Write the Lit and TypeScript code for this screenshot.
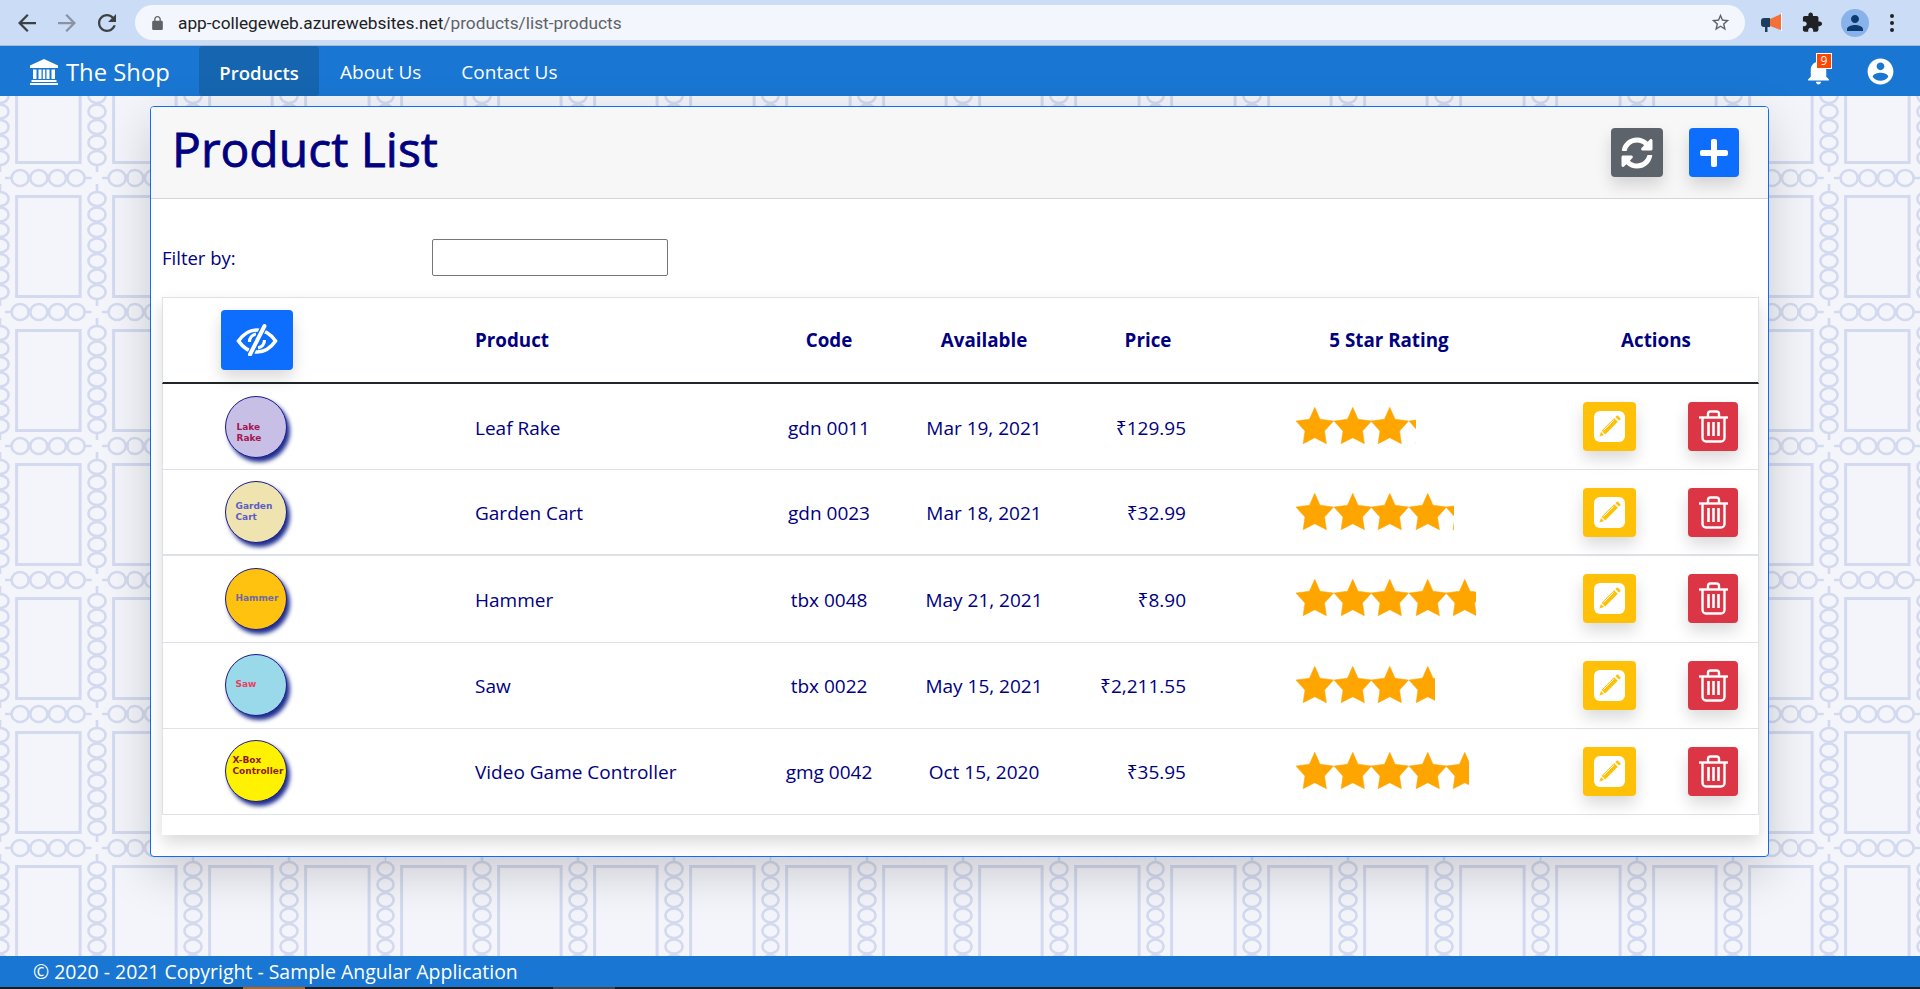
import { LitElement, html, svg, css } from 'lit';
import { customElement, state } from 'lit/decorators.js';

interface Product {
  name: string;
  code: string;
  available: string;
  price: string;
  rating: number;
  label: string[];
  disc: string;
  ink: string;
  inset: number;
  lift: number;
}

const PRODUCTS: Product[] = [
  { name: 'Leaf Rake', code: 'gdn 0011', available: 'Mar 19, 2021', price: '₹129.95', rating: 3.2, label: ['Lake', 'Rake'], disc: '#c8bfe7', ink: '#a3174c', inset: 11, lift: 12 },
  { name: 'Garden Cart', code: 'gdn 0023', available: 'Mar 18, 2021', price: '₹32.99', rating: 4.2, label: ['Garden', 'Cart'], disc: '#efe4b0', ink: '#5c5cc8', inset: 10, lift: 0 },
  { name: 'Hammer', code: 'tbx 0048', available: 'May 21, 2021', price: '₹8.90', rating: 4.8, label: ['Hammer'], disc: '#ffc20e', ink: '#6a6aa8', inset: 10, lift: 0 },
  { name: 'Saw', code: 'tbx 0022', available: 'May 15, 2021', price: '₹2,211.55', rating: 3.7, label: ['Saw'], disc: '#99d9ea', ink: '#ea3f5c', inset: 10, lift: -2 },
  { name: 'Video Game Controller', code: 'gmg 0042', available: 'Oct 15, 2020', price: '₹35.95', rating: 4.6, label: ['X-Box', 'Controller'], disc: '#fff200', ink: '#8c1c13', inset: 7, lift: -10 },
];

const STAR_WIDTH = 37.5;

const starIcon = svg`<path d="M50 1L64 33 100 38 76 65 81 99 50 83 19 99 24 65 0 38 36 33z" stroke="#ffa500" stroke-width="1.5" stroke-linejoin="round" />`;

@customElement('app-root')
export class AppRoot extends LitElement {
  static styles = css`
    :host {
      display: flex;
      flex-direction: column;
      height: 989px;
      overflow: hidden;
      font-family: 'Open Sans', 'Noto Sans', sans-serif;
      color: #000080;
      background-color: #f4f4fb;
      background-image: url("data:image/svg+xml,%3Csvg xmlns='http://www.w3.org/2000/svg' width='96.25' height='134'%3E%3Cg fill='none' stroke='%23d3d9ee' stroke-width='2.6'%3E%3Crect x='16.500' y='18.500' width='63' height='100' stroke-width='3'/%3E%3Cellipse cx='0' cy='21' rx='8.500' ry='7'/%3E%3Cellipse cx='0' cy='36.500' rx='8.500' ry='7'/%3E%3Cellipse cx='0' cy='52' rx='8.500' ry='7'/%3E%3Cellipse cx='0' cy='67.500' rx='8.500' ry='7'/%3E%3Cellipse cx='0' cy='83' rx='8.500' ry='7'/%3E%3Cellipse cx='0' cy='98.500' rx='8.500' ry='7'/%3E%3Cellipse cx='0' cy='114' rx='8.500' ry='7'/%3E%3Cellipse cx='96.250' cy='21' rx='8.500' ry='7'/%3E%3Cellipse cx='96.250' cy='36.500' rx='8.500' ry='7'/%3E%3Cellipse cx='96.250' cy='52' rx='8.500' ry='7'/%3E%3Cellipse cx='96.250' cy='67.500' rx='8.500' ry='7'/%3E%3Cellipse cx='96.250' cy='83' rx='8.500' ry='7'/%3E%3Cellipse cx='96.250' cy='98.500' rx='8.500' ry='7'/%3E%3Cellipse cx='96.250' cy='114' rx='8.500' ry='7'/%3E%3Cellipse cx='20' cy='0' rx='8.500' ry='8'/%3E%3Cellipse cx='38.500' cy='0' rx='8.500' ry='8'/%3E%3Cellipse cx='57' cy='0' rx='8.500' ry='8'/%3E%3Cellipse cx='75.500' cy='0' rx='8.500' ry='8'/%3E%3Cellipse cx='20' cy='134' rx='8.500' ry='8'/%3E%3Cellipse cx='38.500' cy='134' rx='8.500' ry='8'/%3E%3Cellipse cx='57' cy='134' rx='8.500' ry='8'/%3E%3Cellipse cx='75.500' cy='134' rx='8.500' ry='8'/%3E%3Cpath d='M0 14V6M0 121V128M96.250 14V6M96.250 121V128M12 0H5M84 0H91M12 134H5M84 134H91'/%3E%3C/g%3E%3C/svg%3E");
      background-size: 96.25px 134px;
      background-position: 0.5px 44px;
    }

    svg {
      display: block;
      fill: currentColor;
    }

    .chrome {
      display: flex;
      align-items: center;
      height: 45px;
      flex: none;
      background: #cbdcf6;
      border-bottom: 1px solid #a9bbd3;
      color: #3c4043;
    }
    .chrome-nav {
      display: flex;
      align-items: center;
      width: 135px;
      flex: none;
      padding-left: 18px;
      gap: 22px;
      box-sizing: border-box;
    }
    .chrome-nav svg {
      width: 18px;
      height: 18px;
    }
    .chrome-nav .off {
      color: #8a93a3;
    }
    .omnibox {
      display: flex;
      align-items: center;
      width: 1610px;
      height: 35px;
      flex: none;
      box-sizing: border-box;
      padding: 0 14px 0 16px;
      border-radius: 18px;
      background: #f3f6fc;
      font-family: 'Roboto', sans-serif;
      font-size: 17.3px;
      color: #5f6368;
    }
    .omnibox .lock {
      width: 13px;
      height: 14px;
      margin-right: 14px;
    }
    .omnibox .host {
      color: #202124;
    }
    .omnibox .fav {
      width: 21px;
      height: 21px;
      margin-left: auto;
      color: #5f6368;
    }
    .chrome-tools {
      display: flex;
      align-items: center;
      flex: 1;
      padding-left: 16px;
      gap: 19px;
    }
    .chrome-tools .puzzle {
      width: 21px;
      height: 21px;
      color: #202124;
    }
    .avatar {
      display: flex;
      align-items: center;
      justify-content: center;
      width: 28px;
      height: 28px;
      border-radius: 50%;
      background: #8ab2ea;
      color: #0b3a70;
      margin-left: -1px;
    }
    .avatar svg {
      width: 24px;
      height: 24px;
    }
    .kebab {
      display: flex;
      flex-direction: column;
      gap: 3px;
      margin-left: 2px;
    }
    .kebab i {
      width: 4px;
      height: 4px;
      border-radius: 50%;
      background: #202124;
    }

    .topnav {
      display: flex;
      align-items: stretch;
      height: 50px;
      flex: none;
      background: #1976d2;
      color: #fff;
    }
    .brand {
      display: flex;
      align-items: center;
      width: 199px;
      flex: none;
      box-sizing: border-box;
      padding-left: 30px;
      gap: 8px;
      font-size: 23.8px;
      padding-top: 2px;
    }
    .brand svg {
      width: 28px;
      height: 26px;
    }
    .navlink {
      display: flex;
      align-items: center;
      padding: 2px 20px 0;
      font-size: 19px;
      border-radius: 4px;
    }
    .navlink.active {
      width: 120px;
      box-sizing: border-box;
      justify-content: center;
      padding: 2px 0 0;
      background: #1565b0;
      font-size: 18.5px;
      font-weight: 600;
    }
    .navlink.active + .navlink {
      margin-left: 1px;
    }
    .nav-right {
      display: flex;
      align-items: center;
      margin-left: auto;
      padding-right: 24px;
      gap: 31px;
    }
    .bell {
      position: relative;
    }
    .bell svg {
      width: 31px;
      height: 31px;
    }
    .bell .badge {
      position: absolute;
      top: -3px;
      right: 2px;
      width: 16px;
      height: 16px;
      box-sizing: border-box;
      border: 1px solid #fff;
      background: #ff4500;
      font-size: 12px;
      line-height: 14px;
      text-align: center;
    }
    .account svg {
      width: 31px;
      height: 31px;
    }

    main {
      flex: 1;
      min-height: 0;
      padding: 10px 0 0 150px;
    }
    .card {
      width: 1619px;
      height: 751px;
      box-sizing: border-box;
      border: 1px solid #0d6efd;
      border-radius: 4px;
      background: #fff;
      box-shadow: 0 16px 48px rgba(0, 0, 0, 0.175);
    }
    .card-head {
      display: flex;
      align-items: center;
      height: 92px;
      box-sizing: border-box;
      padding: 0 29px 0 21px;
      background: #f7f7f7;
      border-bottom: 1px solid #d5d5d8;
      border-radius: 3px 3px 0 0;
    }
    .card-head h1 {
      margin: -8px auto 0 0;
      font-size: 48px;
      font-weight: 400;
      line-height: 1;
      -webkit-text-stroke: 0.8px #000080;
    }
    .btn {
      display: flex;
      align-items: center;
      justify-content: center;
      height: 49px;
      border-radius: 4px;
      flex: none;
      color: #fff;
      box-shadow: 0 8px 16px rgba(0, 0, 0, 0.15);
    }
    .btn.refresh {
      width: 52px;
      background: #5c636a;
      margin-right: 26px;
    }
    .btn.refresh svg {
      width: 32px;
      height: 32px;
    }
    .btn.add {
      width: 50px;
      background: #0d6efd;
    }
    .btn.add svg {
      width: 28px;
      height: 32px;
    }
    .filter {
      display: flex;
      align-items: center;
      height: 98px;
      padding: 18px 0 0 11px;
      box-sizing: border-box;
      font-size: 18.5px;
    }
    .filter label {
      width: 270px;
      flex: none;
    }
    .filter input {
      width: 236px;
      height: 37px;
      box-sizing: border-box;
      border: 1px solid #767676;
      border-radius: 2px;
      background: #fff;
    }

    .table {
      width: 1597px;
      height: 538px;
      margin-left: 11px;
      box-sizing: border-box;
      border-top: 1px solid #dee2e6;
      background: #fff;
      box-shadow: 0 8px 16px rgba(0, 0, 0, 0.15);
      font-size: 19px;
    }
    .row {
      display: grid;
      grid-template-columns: 187px 400px 158px 152px 176px 306px 216px;
      align-items: center;
      height: 86.2px;
      padding-top: 2px;
      box-sizing: border-box;
      border-bottom: 1px solid #dee2e6;
      border-left: 1px solid #dee2e6;
      border-right: 1px solid #dee2e6;
    }
    .row:nth-child(3) {
      border-bottom-width: 2px;
    }
    .row.head {
      height: 86px;
      padding-top: 0;
      font-weight: 700;
      border-bottom: 2px solid #212529;
      font-size: 18.8px;
    }
    .cell-center {
      text-align: center;
    }
    .cell-name {
      padding-left: 125px;
    }
    .cell-price {
      text-align: right;
      padding-right: 50px;
    }
    .row.head .cell-price {
      text-align: center;
      padding-right: 0;
    }
    .row.head .cell-actions {
      padding-left: 12px;
      text-align: center;
    }
    .eye {
      width: 72px;
      height: 60px;
      margin: 0 auto;
      background: #0d6efd;
    }
    .eye svg {
      width: 42px;
      height: 32px;
    }
    .disc-cell {
      display: flex;
      justify-content: center;
    }
    .disc {
      display: flex;
      flex-direction: column;
      justify-content: center;
      width: 62px;
      height: 62px;
      margin: -2px 0 0 -2px;
      box-sizing: border-box;
      border: 1px solid #1a1a8c;
      border-radius: 50%;
      box-shadow: 3px 4px 4px #1f2f8f;
      font-family: 'DejaVu Sans', sans-serif;
      font-size: 9px;
      font-weight: 700;
      line-height: 11px;
    }
    .rating {
      height: 38px;
      margin-left: 60px;
      margin-top: -3px;
      overflow: hidden;
    }
    .rating-row {
      display: flex;
      width: 195px;
      color: #ffa500;
    }
    .rating-row svg {
      width: 37.5px;
      height: 37px;
      flex: none;
      overflow: visible;
    }
    .actions {
      display: flex;
      align-items: center;
      margin-top: -2px;
      padding: 0 0 0 41px;
      gap: 52px;
    }
    .btn.edit {
      width: 53px;
      background: #ffc107;
    }
    .btn.edit svg {
      width: 31px;
      height: 31px;
    }
    .btn.remove {
      width: 50px;
      background: #dc3545;
    }
    .btn.remove svg {
      width: 29px;
      height: 33px;
      fill: none;
    }

    footer {
      display: flex;
      align-items: center;
      height: 31px;
      flex: none;
      padding-left: 33px;
      background: #1976d2;
      color: #fff;
      font-size: 19.45px;
    }
    .taskbar {
      display: flex;
      height: 2px;
      flex: none;
      background: #1c1c1c;
    }
    .taskbar i {
      width: 62px;
      height: 2px;
    }
    .taskbar .open {
      margin-left: 243px;
      background: #b4631f;
    }
    .taskbar .idle {
      margin-left: 248px;
      background: #444;
    }
  `;

  @state()
  private products: Product[] = PRODUCTS;

  private renderStars(rating: number) {
    return html`
      <div class="rating" style="width: ${rating * STAR_WIDTH}px">
        <div class="rating-row">
          ${[0, 1, 2, 3, 4].map(
            () => html`<svg viewBox="0 0 100 100" preserveAspectRatio="none">${starIcon}</svg>`,
          )}
        </div>
      </div>
    `;
  }

  private renderRow(product: Product) {
    return html`
      <div class="row">
        <div class="disc-cell">
          <div
            class="disc"
            style="background: ${product.disc}; color: ${product.ink}; padding: 0 0 ${product.lift < 0 ? -product.lift : 0}px ${product.inset}px; padding-top: ${product.lift > 0 ? product.lift : 0}px"
          >
            ${product.label.map((line) => html`<span>${line}</span>`)}
          </div>
        </div>
        <div class="cell-name">${product.name}</div>
        <div class="cell-center">${product.code}</div>
        <div class="cell-center">${product.available}</div>
        <div class="cell-price">${product.price}</div>
        <div>${this.renderStars(product.rating)}</div>
        <div class="actions">
          <div class="btn edit">
            <svg viewBox="0 0 31 31">
              <rect width="31" height="31" rx="6" fill="#fff" />
              <path d="M20.2 7.2l3.6 3.6-12.600 12.600-3.600-3.600z" fill="#ffc107" />
              <path d="M21.4 6l1.2-1.2a1 1 0 0 1 1.4 0l2.2 2.2a1 1 0 0 1 0 1.4L25 9.600z" fill="#ffc107" />
              <path d="M7 21l3 3-4.600 1.600z" fill="#ffc107" />
              <path d="M9.600 19.400l10-10" stroke="#fff" stroke-width="1" fill="none" />
            </svg>
          </div>
          <div class="btn remove">
            <svg viewBox="0 0 29 33" stroke="#fff" stroke-width="2.4">
              <path d="M0 7.500h29" />
              <path d="M9 7V4a2.500 2.500 0 0 1 2.500-2.500h6A2.500 2.500 0 0 1 20 4v3" />
              <path d="M3.500 7.500V28a3.500 3.500 0 0 0 3.500 3.500h15a3.500 3.500 0 0 0 3.500-3.500V7.500" />
              <path d="M9.500 12v14M14.500 12v14M19.500 12v14" stroke-width="2.600" />
            </svg>
          </div>
        </div>
      </div>
    `;
  }

  render() {
    return html`
      <div class="chrome">
        <div class="chrome-nav">
          <svg viewBox="4 4 16 16"><path d="M20 11H7.830l5.590-5.590L12 4l-8 8 8 8 1.410-1.410L7.830 13H20v-2z" /></svg>
          <svg class="off" viewBox="4 4 16 16"><path d="M12 4l-1.410 1.410L16.170 11H4v2h12.170l-5.580 5.590L12 20l8-8z" /></svg>
          <svg viewBox="4 4 16 16"><path d="M17.650 6.350C16.200 4.900 14.210 4 12 4c-4.420 0-7.990 3.580-7.990 8s3.570 8 7.990 8c3.730 0 6.840-2.550 7.730-6h-2.080c-.82 2.330-3.040 4-5.650 4-3.310 0-6-2.690-6-6s2.690-6 6-6c1.660 0 3.140.69 4.220 1.780L13 11h7V4l-2.350 2.350z" /></svg>
        </div>
        <div class="omnibox">
          <svg class="lock" viewBox="4 1 16 21"><path d="M18 8h-1V6c0-2.760-2.240-5-5-5S7 3.240 7 6v2H6c-1.100 0-2 .9-2 2v10c0 1.100.9 2 2 2h12c1.100 0 2-.9 2-2V10c0-1.100-.9-2-2-2zM9 6c0-1.660 1.340-3 3-3s3 1.340 3 3v2H9V6z" /></svg>
          <span class="host">app-collegeweb.azurewebsites.net</span><span>/products/list-products</span>
          <svg class="fav" viewBox="0 0 24 24"><path d="M22 9.240l-7.190-.62L12 2 9.190 8.630 2 9.240l5.460 4.730L5.820 21 12 17.270 18.180 21l-1.630-7.030L22 9.240zM12 15.400l-3.760 2.270 1-4.280-3.320-2.880 4.380-.38L12 6.100l1.710 4.040 4.380.38-3.320 2.880 1 4.280L12 15.400z" /></svg>
        </div>
        <div class="chrome-tools">
          <svg width="22" height="20" viewBox="0 0 22 20">
            <path d="M9 6l11-5v16L9 13z" fill="#f4703a" />
            <path d="M20 0h1v18h-1z" fill="#fff" />
            <path d="M3 5h6v9H6.500v5H4v-5H3a3 3 0 0 1-3-3V8a3 3 0 0 1 3-3z" fill="#1d3f5e" />
          </svg>
          <svg class="puzzle" viewBox="1 1 23 22"><path d="M20.500 11H19V7c0-1.100-.9-2-2-2h-4V3.500C13 2.120 11.880 1 10.500 1S8 2.120 8 3.500V5H4c-1.100 0-1.990.9-1.990 2v3.800H3.500c1.490 0 2.700 1.210 2.700 2.700s-1.210 2.700-2.700 2.700H2V20c0 1.100.9 2 2 2h3.800v-1.500c0-1.490 1.210-2.700 2.700-2.700 1.490 0 2.700 1.210 2.700 2.700V22H17c1.100 0 2-.9 2-2v-4h1.500c1.380 0 2.500-1.120 2.500-2.500S21.880 11 20.500 11z" /></svg>
          <div class="avatar">
            <svg viewBox="0 0 24 24"><path d="M12 12c2.210 0 4-1.790 4-4s-1.790-4-4-4-4 1.790-4 4 1.790 4 4 4zm0 2c-2.670 0-8 1.340-8 4v2h16v-2c0-2.660-5.330-4-8-4z" /></svg>
          </div>
          <div class="kebab"><i></i><i></i><i></i></div>
        </div>
      </div>

      <nav class="topnav">
        <div class="brand">
          <svg viewBox="0 0 28 26">
            <path d="M14 0l14 6.500V9H0V6.500z" />
            <path d="M3 10.500h3.500V20H3zM8.500 10.500h3V20h-3zM12.800 10.500h2.400V20h-2.400zM16.500 10.500h3V20h-3zM21.500 10.500H25V20h-3.500z" />
            <path d="M1.500 21h25v2h-25zM0 24h28v2H0z" />
          </svg>
          <span>The Shop</span>
        </div>
        <a class="navlink active">Products</a>
        <a class="navlink">About Us</a>
        <a class="navlink">Contact Us</a>
        <div class="nav-right">
          <div class="bell">
            <svg viewBox="0 0 24 24"><path d="M12 22c1.100 0 2-.9 2-2h-4c0 1.100.9 2 2 2zm6-6v-5c0-3.070-1.630-5.640-4.500-6.320V4c0-.83-.67-1.500-1.500-1.500s-1.500.67-1.500 1.500v.68C7.640 5.360 6 7.920 6 11v5l-2 2v1h16v-1l-2-2z" /></svg>
            <span class="badge">9</span>
          </div>
          <div class="account">
            <svg viewBox="0 0 24 24"><path d="M12 2C6.480 2 2 6.480 2 12s4.480 10 10 10 10-4.480 10-10S17.520 2 12 2zm0 3c1.660 0 3 1.340 3 3s-1.340 3-3 3-3-1.340-3-3 1.340-3 3-3zm0 14.200c-2.500 0-4.710-1.280-6-3.220.03-1.990 4-3.080 6-3.080 1.990 0 5.970 1.090 6 3.080-1.290 1.940-3.500 3.220-6 3.220z" /></svg>
          </div>
        </div>
      </nav>

      <main>
        <section class="card">
          <header class="card-head">
            <h1>Product List</h1>
            <div class="btn refresh">
              <svg viewBox="0 0 512 512"><path d="M370.720 133.280C339.458 104.008 298.888 87.962 255.848 88c-77.458.068-144.328 53.178-162.791 126.850-1.344 5.363-6.122 9.150-11.651 9.150H24.103c-7.498 0-13.194-6.807-11.807-14.176C33.933 94.924 134.813 8 256 8c66.448 0 126.791 26.136 171.315 68.685L463.030 40.970C478.149 25.851 504 36.559 504 57.941V192c0 13.255-10.745 24-24 24H345.941c-21.382 0-32.090-25.851-16.971-40.971l41.750-41.749zM32 296h134.059c21.382 0 32.090 25.851 16.971 40.971l-41.750 41.750c31.262 29.273 71.835 45.319 114.876 45.280 77.418-.07 144.315-53.144 162.787-126.849 1.344-5.363 6.122-9.150 11.651-9.150h57.304c7.498 0 13.194 6.807 11.807 14.176C478.067 417.076 377.187 504 256 504c-66.448 0-126.791-26.136-171.315-68.685L48.970 471.030C33.851 486.149 8 475.441 8 454.059V320c0-13.255 10.745-24 24-24z" /></svg>
            </div>
            <div class="btn add">
              <svg viewBox="0 0 448 512"><path d="M416 208H272V64c0-17.670-14.330-32-32-32h-32c-17.670 0-32 14.330-32 32v144H32c-17.670 0-32 14.330-32 32v32c0 17.670 14.330 32 32 32h144v144c0 17.670 14.330 32 32 32h32c17.670 0 32-14.330 32-32V304h144c17.670 0 32-14.330 32-32v-32c0-17.670-14.330-32-32-32z" /></svg>
            </div>
          </header>

          <div class="filter">
            <label>Filter by:</label>
            <input type="text" />
          </div>

          <div class="table">
            <div class="row head">
              <div class="disc-cell">
                <div class="btn eye">
                  <svg viewBox="0 0 42 32">
                    <path d="M2.500 17C8 9 14 6 21 6s13 3 18.500 11C34 25 28 28 21 28S8 25 2.500 17z" fill="none" stroke="#fff" stroke-width="3.600" />
                    <path d="M13.500 18a8 8 0 0 1 6.500-8" fill="none" stroke="#fff" stroke-width="3.200" />
                    <path d="M28.500 16a8 8 0 0 1-6.500 8" fill="none" stroke="#fff" stroke-width="3.200" />
                    <path d="M28.500 1.500L14 31" stroke="#0d6efd" stroke-width="6.500" />
                    <path d="M28.500 2L14 30.500" stroke="#fff" stroke-width="4" stroke-linecap="round" />
                  </svg>
                </div>
              </div>
              <div class="cell-name">Product</div>
              <div class="cell-center">Code</div>
              <div class="cell-center">Available</div>
              <div class="cell-price">Price</div>
              <div class="cell-center">5 Star Rating</div>
              <div class="cell-actions">Actions</div>
            </div>
            ${this.products.map((product) => this.renderRow(product))}
          </div>
        </section>
      </main>

      <footer>© 2020 - 2021 Copyright - Sample Angular Application</footer>
      <div class="taskbar"><i class="open"></i><i class="idle"></i></div>
    `;
  }
}

declare global {
  interface HTMLElementTagNameMap {
    'app-root': AppRoot;
  }
}
